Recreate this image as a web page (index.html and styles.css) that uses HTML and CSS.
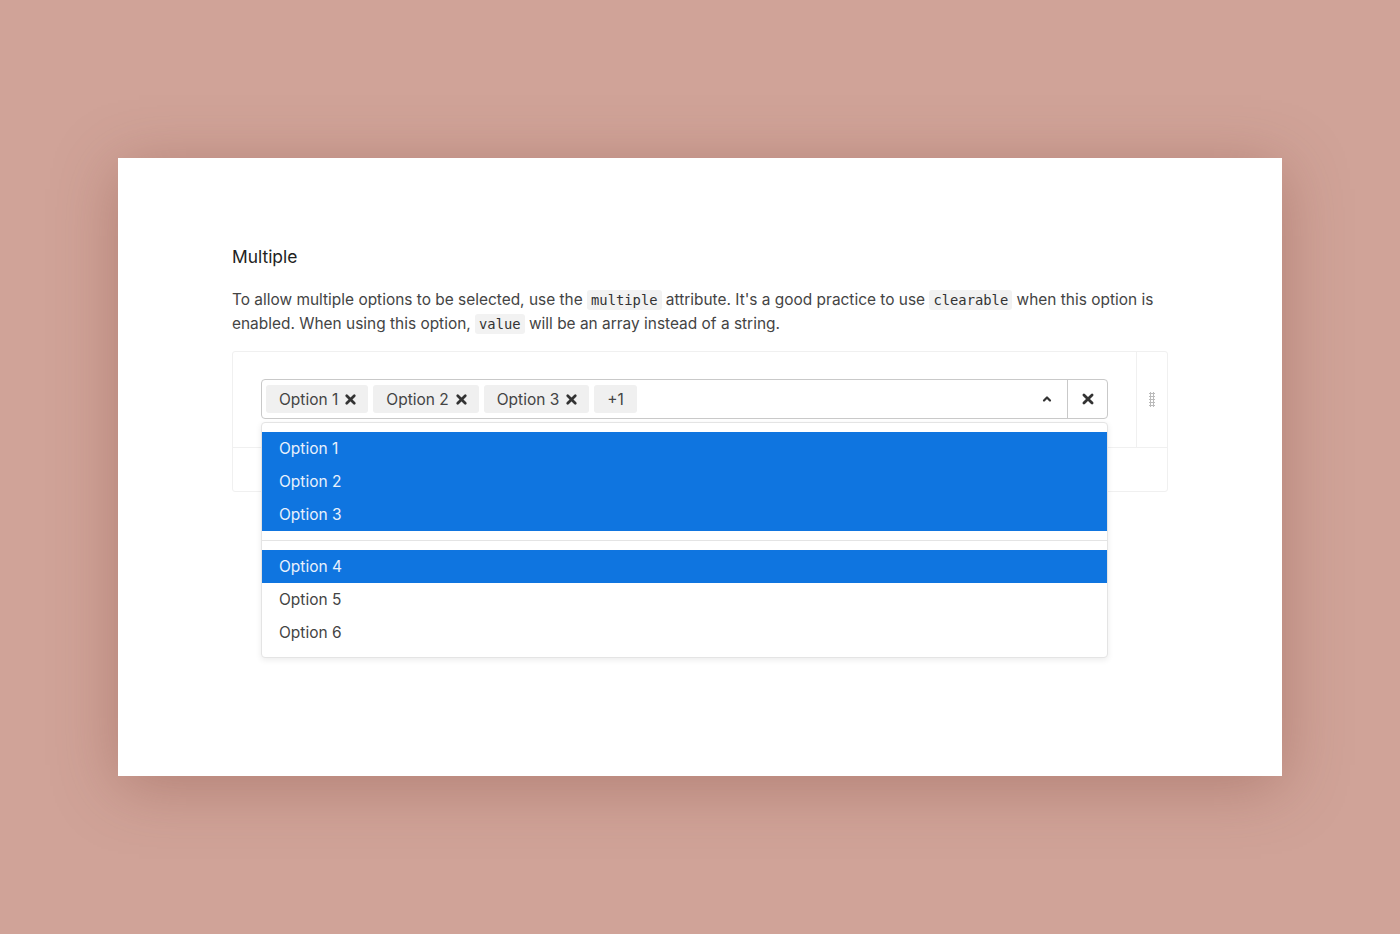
FILE: index.html
```html
<!DOCTYPE html>
<html>
<head>
<meta charset="utf-8">
<link rel="stylesheet" href="styles.css">
</head>
<body>
<div class="page">
  <div class="card">
    <h2 class="title">Multiple</h2>
    <p class="desc">To allow multiple options to be selected, use the <code>multiple</code> attribute. It's a good practice to use <code>clearable</code> when this option is enabled. When using this option, <code>value</code> will be an array instead of a string.</p>
    <div class="demo">
      <div class="demo-row">
        <div class="preview">
          <div class="select-wrap">
            <div class="select">
              <div class="tags">
                <span class="tag">Option 1 <svg class="tx" viewBox="0 0 12 12"><path d="M2.5 2.5 9.5 9.5M9.5 2.5 2.5 9.5"/></svg></span>
                <span class="tag">Option 2 <svg class="tx" viewBox="0 0 12 12"><path d="M2.5 2.5 9.5 9.5M9.5 2.5 2.5 9.5"/></svg></span>
                <span class="tag">Option 3 <svg class="tx" viewBox="0 0 12 12"><path d="M2.5 2.5 9.5 9.5M9.5 2.5 2.5 9.5"/></svg></span>
                <span class="tag more">+1</span>
              </div>
              <div class="chev"><svg viewBox="0 0 12 12"><path d="M3 7.5 6 4.5 9 7.5"/></svg></div>
              <div class="clear"><svg viewBox="0 0 12 12"><path d="M2.5 2.5 9.5 9.5M9.5 2.5 2.5 9.5"/></svg></div>
            </div>
            <div class="menu">
              <div class="item sel">Option 1</div>
              <div class="item sel">Option 2</div>
              <div class="item sel">Option 3</div>
              <div class="divider"></div>
              <div class="item sel">Option 4</div>
              <div class="item">Option 5</div>
              <div class="item">Option 6</div>
            </div>
          </div>
        </div>
        <div class="handle"><span class="dots"></span></div>
      </div>
      <div class="demo-foot"></div>
    </div>
  </div>
</div>
</body>
</html>
```
FILE: styles.css
```css
html, body { margin: 0; padding: 0; }
body {
  background: #d0a398;
  font-family: Inter, "Noto Sans", sans-serif;
  color: #333;
}
.page {
  width: 1400px;
  height: 934px;
  padding-top: 158px;
  box-sizing: border-box;
}
.card {
  margin-left: 118px;
  width: 1164px;
  height: 618px;
  background: #fff;
  box-sizing: border-box;
  padding: 87px 0 0 114px;
  box-shadow: 0 10px 60px rgba(120, 60, 50, 0.35);
}
.title {
  margin: 0;
  font-size: 17.4px;
  font-weight: 400;
  line-height: 24px;
  color: #222;
}
.desc {
  margin: 19px 0 15px;
  width: 940px;
  font-size: 15.45px;
  line-height: 24px;
  color: #444;
}
code {
  font-family: "DejaVu Sans Mono", monospace;
  font-size: 13.8px;
  line-height: 1;
  background: #f2f2f2;
  padding: 2px 4px;
  border-radius: 3px;
  color: #333;
}
.demo {
  width: 936px;
  border: 1px solid #f0f0f0;
  border-radius: 3px;
  box-sizing: border-box;
}
.demo-row {
  display: flex;
  height: 95px;
  border-bottom: 1px solid #f0f0f0;
}
.preview {
  flex: 1;
  padding: 27px 28px 0 28px;
  border-right: 1px solid #f0f0f0;
}
.handle {
  width: 30px;
  display: flex;
  justify-content: center;
  padding-top: 40px;
}
.dots {
  width: 6px;
  height: 15px;
  background-image: radial-gradient(circle, #bbb 1px, transparent 1.1px);
  background-size: 3px 3px;
}
.demo-foot { height: 43px; }
.select-wrap { position: relative; }
.select {
  height: 40px;
  box-sizing: border-box;
  border: 1px solid #c9c9c9;
  border-radius: 4px;
  display: flex;
  align-items: center;
  background: #fff;
}
.tags {
  flex: 1;
  display: flex;
  gap: 5px;
  padding-left: 4px;
}
.tag {
  display: inline-flex;
  align-items: center;
  height: 28px;
  padding: 0 11px 0 13px;
  background: #f0f0f0;
  border-radius: 3px;
  font-size: 15.5px;
  color: #444;
}
.tag.more { padding: 0 13px; }
.tx {
  width: 13px;
  height: 13px;
  margin-left: 6px;
  fill: none;
  stroke: #333;
  stroke-width: 2.5;
  stroke-linecap: round;
}
.chev {
  width: 40px;
  display: flex;
  justify-content: center;
}
.chev svg {
  width: 12px;
  height: 12px;
  fill: none;
  stroke: #333;
  stroke-width: 2.2;
  stroke-linecap: round;
  stroke-linejoin: round;
}
.clear {
  width: 39px;
  height: 38px;
  border-left: 1px solid #c9c9c9;
  display: flex;
  align-items: center;
  justify-content: center;
}
.clear svg {
  width: 14px;
  height: 14px;
  fill: none;
  stroke: #333;
  stroke-width: 2.4;
  stroke-linecap: round;
}
.menu {
  position: absolute;
  left: 0;
  right: 0;
  top: 43px;
  background: #fff;
  border: 1px solid #e4e4e4;
  border-radius: 4px;
  box-shadow: 0 2px 6px rgba(0, 0, 0, 0.08);
  padding: 9px 0 8px;
}
.item {
  height: 33px;
  line-height: 33px;
  padding-left: 17px;
  font-size: 15.5px;
  color: #444;
}
.item.sel {
  background: #0f75e0;
  color: #e8f1fc;
}
.divider {
  height: 1px;
  background: #e4e4e4;
  margin: 9px 0 9px;
}
```
